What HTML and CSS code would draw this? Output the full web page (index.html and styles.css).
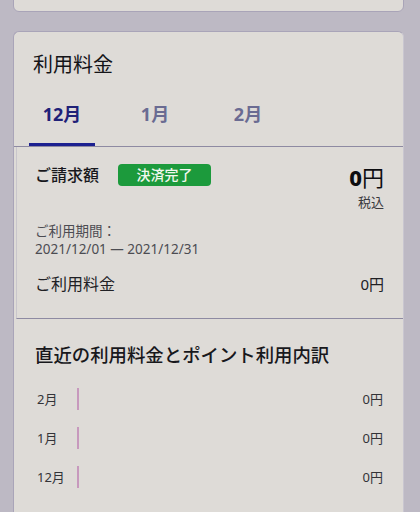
FILE: index.html
```html
<!DOCTYPE html>
<html lang="ja">
<head>
<meta charset="utf-8">
<link rel="stylesheet" href="styles.css">
</head>
<body>
<div class="page">
  <div class="card card-top"></div>
  <div class="card card-main">
    <h1 class="title">利用料金</h1>
    <div class="tabs">
      <div class="tab active">12月</div>
      <div class="tab">1月</div>
      <div class="tab">2月</div>
    </div>
    <section class="bill">
      <div class="bill-head">
        <div class="bill-label">
          <span class="label">ご請求額</span>
          <span class="badge">決済完了</span>
        </div>
        <div class="bill-amount">
          <div class="amount"><b>0</b>円</div>
          <div class="tax">税込</div>
        </div>
      </div>
      <div class="period">
        <div>ご利用期間：</div>
        <div>2021/12/01 — 2021/12/31</div>
      </div>
      <div class="fee-row">
        <span>ご利用料金</span>
        <span class="fee-val">0円</span>
      </div>
    </section>
    <section class="history">
      <h2 class="history-title">直近の利用料金とポイント利用内訳</h2>
      <div class="hrow"><span class="hmonth">2月</span><span class="hbar"></span><span class="hval">0円</span></div>
      <div class="hrow"><span class="hmonth">1月</span><span class="hbar"></span><span class="hval">0円</span></div>
      <div class="hrow"><span class="hmonth">12月</span><span class="hbar"></span><span class="hval">0円</span></div>
    </section>
  </div>
</div>
</body>
</html>
```

FILE: styles.css
```css
* { box-sizing: border-box; margin: 0; padding: 0; }
html, body { width: 420px; height: 512px; overflow: hidden; }
body {
  background: #bdb9c4;
  font-family: "Noto Sans", "Noto Sans CJK JP", sans-serif;
  color: #1e1e24;
}
.page {
  display: flex;
  flex-direction: column;
  gap: 19px;
  padding: 0 16px 0 13px;
  margin-top: -21px;
}
.card {
  background: #dedbd7;
  border: 1px solid #a9a4b8;
  border-radius: 6px;
}
.card-top { height: 33px; }
.card-main {
  padding-top: 19px;
  height: 500px;
  border-right-color: #c9c6d0;
  border-bottom: none;
  border-bottom-left-radius: 0;
  border-bottom-right-radius: 0;
}
.title {
  font-size: 20px;
  font-weight: 400;
  line-height: 28px;
  padding-left: 19px;
  color: #141418;
}
.tabs {
  display: flex;
  margin-top: 15px;
  border-bottom: 1px solid #8e8aa2;
  padding-left: 15px;
}
.tab {
  font-size: 18px;
  font-weight: 700;
  color: #6a6b92;
  line-height: 24px;
  padding: 8px 0 20px;
  width: 66px;
  text-align: center;
  margin-right: 27px;
}
.tab.active {
  color: #1f2178;
  box-shadow: inset 0 -3px 0 #1c2090;
}
.bill {
  padding: 17px 19px 23px 18px;
  border-bottom: 1px solid #8e8aa2;
  border-left: 1px solid #c9c6cc;
  margin-left: 2px;
}
.bill-head {
  display: flex;
  justify-content: space-between;
  align-items: flex-start;
}
.bill-label { display: flex; align-items: center; gap: 19px; }
.label { font-size: 16px; font-weight: 500; line-height: 22px; color: #18181c; }
.badge {
  background: #1c9a3c;
  color: #f2f7ee;
  font-size: 14px;
  font-weight: 500;
  border-radius: 4px;
  line-height: 22px;
  width: 93px;
  text-align: center;
}
.bill-amount { text-align: right; }
.amount { font-size: 22px; line-height: 26px; color: #0d0d10; }
.amount b { font-weight: 800; }
.tax { font-size: 13px; line-height: 18px; color: #3a3a3e; margin-top: 3px; }
.period {
  margin-top: 11px;
  font-size: 13.5px;
  line-height: 18px;
  color: #4c4c52;
}
.fee-row {
  display: flex;
  justify-content: space-between;
  align-items: center;
  margin-top: 15px;
  font-size: 16px;
  line-height: 22px;
  color: #202024;
}
.fee-val { font-size: 15px; }
.history { padding: 23px 20px 0 21px; }
.history-title {
  font-size: 18.4px;
  font-weight: 500;
  line-height: 26px;
  color: #18181c;
  margin-bottom: 11px;
}
.hrow {
  display: flex;
  align-items: center;
  height: 39px;
  font-size: 13px;
  color: #333338;
}
.hmonth { width: 42px; padding-left: 2px; }
.hbar {
  width: 1.5px;
  height: 22px;
  background: #c799bd;
}
.hval { margin-left: auto; font-size: 13px; }
```
